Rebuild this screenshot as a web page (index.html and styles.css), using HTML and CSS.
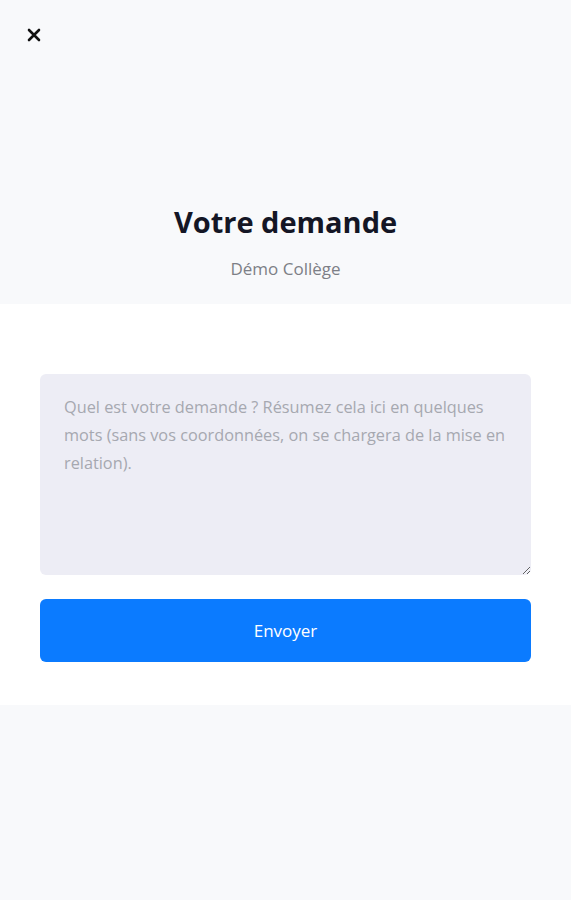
FILE: index.html
```html
<!DOCTYPE html>
<html lang="fr">
<head>
  <meta charset="UTF-8">
  <title>Votre demande</title>
  <link rel="stylesheet" href="styles.css">
</head>
<body>
  <header class="top">
    <button class="close" aria-label="Fermer">
      <svg width="14" height="14" viewBox="0 0 14 14"><path d="M2 2L12 12M12 2L2 12" stroke="#111" stroke-width="2.6" stroke-linecap="round"/></svg>
    </button>
    <h1 class="title">Votre demande</h1>
    <div class="subtitle">Démo Collège</div>
  </header>

  <main class="form-area">
    <textarea class="request" placeholder="Quel est votre demande ? Résumez cela ici en quelques mots (sans vos coordonnées, on se chargera de la mise en relation)."></textarea>
    <button class="send">Envoyer</button>
  </main>
</body>
</html>
```

FILE: styles.css
```css
html, body {
  margin: 0;
  padding: 0;
  background-color: #f8f9fb;
  font-family: "Open Sans", "Noto Sans", sans-serif;
}
.top {
  height: 304px;
  padding-top: 1px;
  box-sizing: border-box;
  text-align: center;
}
.close {
  display: block;
  margin: 27px 0 0 27px;
  width: 14px;
  height: 14px;
  padding: 0;
  border: none;
  background: none;
  cursor: pointer;
}
.title {
  margin: 160px 0 0;
  font-size: 29px;
  font-weight: 700;
  color: #141625;
  line-height: 40px;
}
.subtitle {
  margin-top: 15px;
  font-size: 17px;
  color: #7d7f86;
}
.form-area {
  background-color: #fff;
  padding: 70px 40px 43px;
  display: flex;
  flex-direction: column;
  gap: 24px;
}
.request {
  height: 201px;
  box-sizing: border-box;
  border: none;
  border-radius: 6px;
  background-color: #ededf5;
  padding: 19px 24px;
  font-family: inherit;
  font-size: 16.3px;
  line-height: 28px;
  color: #333;
  resize: vertical;
}
.request::placeholder {
  color: #a6a8b0;
}
.send {
  height: 63px;
  border: none;
  border-radius: 6px;
  background-color: #0b7bff;
  color: #fff;
  font-family: inherit;
  font-size: 17px;
  cursor: pointer;
}
```
